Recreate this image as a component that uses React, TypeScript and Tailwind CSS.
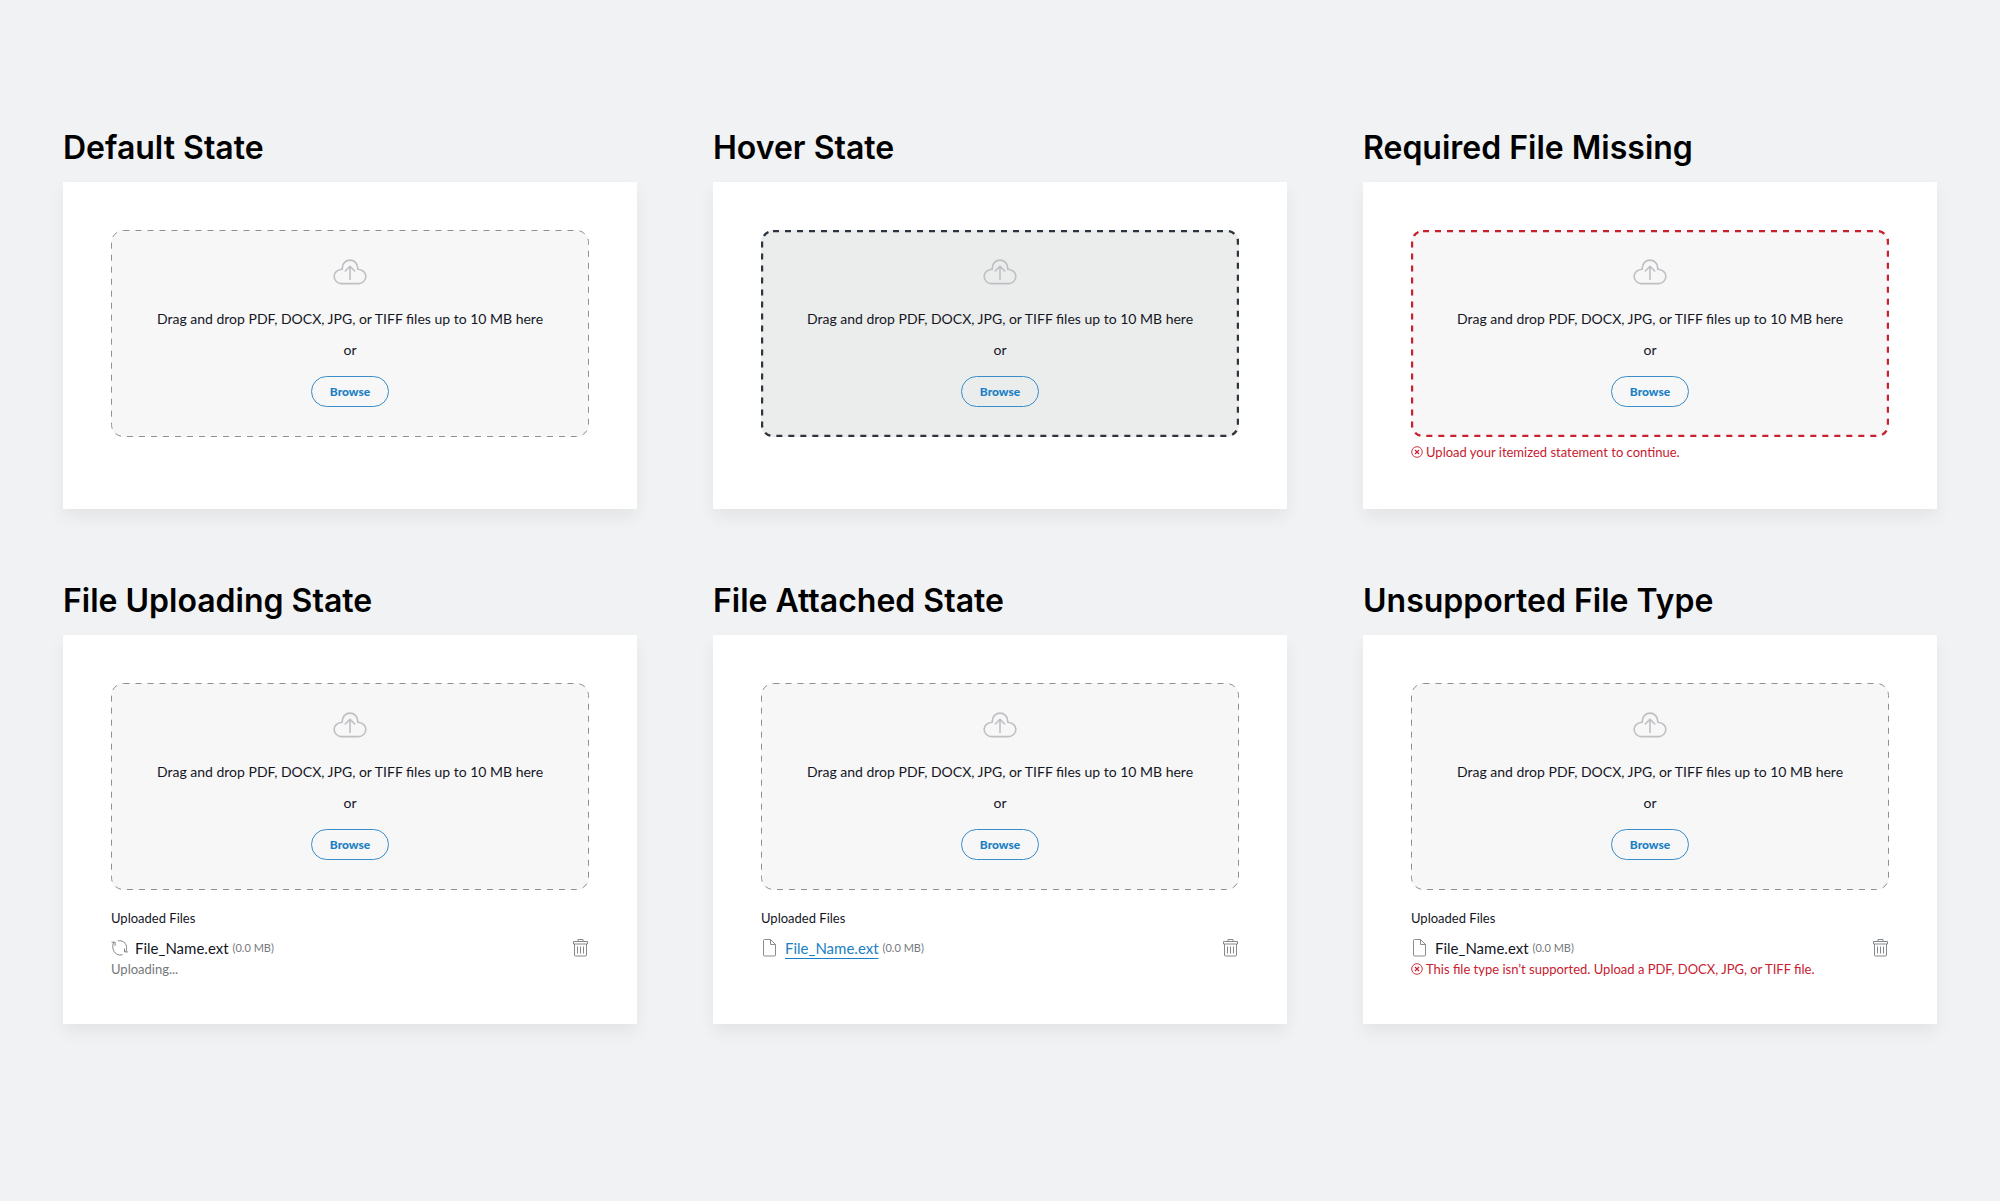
import {clsx} from 'clsx';

type Tone = 'default' | 'hover' | 'error';

interface DropzoneProps {
    id: string
    tone?: Tone
}

interface UploadedFileProps {
    name: string
    size: string
    status: 'uploading' | 'attached' | 'unsupported'
}

interface StateCardProps {
    title: string
    tall?: boolean
    children: React.ReactNode
}

function CloudUploadIcon() {
    return (
        <svg className="w-[34px] h-[26px] text-[#bdbfc2]" viewBox="0 0 34 26" fill="none" stroke="currentColor"
             strokeWidth="1.6" strokeLinecap="round" strokeLinejoin="round" aria-hidden="true">
            <path d="M9.3 10.2V8.8a7.7 7.7 0 0 1 15.4 0v1.4c4.6.2 8.2 3.1 8.2 7.1a7.4 7.4 0 0 1-7.6 7.3H8.7a7.4 7.4 0 0 1-7.6-7.3c0-4 3.6-6.9 8.2-7.1Z"/>
            <path d="M17 20.5V7.3M12.3 12 17 7.3l4.7 4.7"/>
        </svg>
    )
}

function ErrorIcon() {
    return (
        <svg className="w-3 h-3 shrink-0" viewBox="0 0 12 12" fill="none" stroke="currentColor" aria-hidden="true">
            <circle cx="6" cy="6" r="5.3" strokeWidth="0.9"/>
            <path d="m4 4 4 4M8 4 4 8" strokeWidth="1.2"/>
        </svg>
    )
}

function SpinnerIcon() {
    return (
        <svg className="w-[18px] h-4 shrink-0 text-[#75787b]" viewBox="0 0 18 16" fill="none" stroke="currentColor"
             strokeWidth="0.9" aria-hidden="true">
            <path d="M6.8.9C11.5-.2 15.6 3.3 15.6 7.5c0 1.4-.2 2.6-.6 4.1M17.2 11.9h-3.7V8.5"/>
            <path d="M2.8 2.4C.6 6.5 2 11.5 5.3 13.8c1.8 1.3 4.2 1.6 6.2.8M.6 2.2h3.5v3.7"/>
        </svg>
    )
}

function FileIcon() {
    return (
        <svg className="w-[18px] h-[18px] shrink-0 text-[#8a8d90]" viewBox="0 0 18 18" fill="none" stroke="currentColor"
             strokeLinejoin="round" aria-hidden="true">
            <path d="M3.5.5h6l5 5V16a1 1 0 0 1-1 1h-10a1 1 0 0 1-1-1V1.5a1 1 0 0 1 1-1Z"/>
            <path d="M9.5.5v5h5"/>
        </svg>
    )
}

function TrashIcon() {
    return (
        <svg className="w-4 h-[18px] text-[#85888b]" viewBox="0 0 16 18" fill="none" stroke="currentColor"
             strokeLinejoin="round" aria-hidden="true">
            <path d="M.5 2.5h14V5H.5zM5 2.5v-2h5v2M1.5 5v11a1 1 0 0 0 1 1h10a1 1 0 0 0 1-1V5"/>
            <path d="M4.5 7.5v7M7.5 7.5v7M10.5 7.5v7"/>
        </svg>
    )
}

// drawn in svg because the css dashed border has no control over the dash length
function DashedBorder({tone}: {tone: Tone}) {
    return (
        <svg className="absolute inset-0 w-full h-full pointer-events-none" fill="none" aria-hidden="true">
            {tone === 'default' ? (
                <rect x="0.5" y="0.5" rx="12" className="w-[calc(100%-1px)] h-[calc(100%-1px)] stroke-[#8f9193]"
                      strokeWidth="1" strokeDasharray="6 6"/>
            ) : (
                <rect x="1" y="1" rx="11" strokeWidth="2.4" strokeDasharray="6 6"
                      className={clsx('w-[calc(100%-2px)] h-[calc(100%-2px)]', tone === 'hover' ? 'stroke-[#2f333d]' : 'stroke-[#c8202f]')}/>
            )}
        </svg>
    )
}

function Dropzone({id, tone = 'default'}: DropzoneProps) {
    return (
        <div className={clsx('relative flex flex-col items-center rounded-xl pt-[29px] pb-[30px]', tone === 'hover' ? 'bg-[#ebedec]' : 'bg-[#f7f7f7]')}>
            <DashedBorder tone={tone}/>
            <CloudUploadIcon/>
            <p id={id} className="mt-6 text-[14px] leading-5 text-[#14161f]">
                Drag and drop PDF, DOCX, JPG, or TIFF files up to 10 MB here
            </p>
            <p className="mt-[11px] text-[14px] leading-5 text-[#14161f]">or</p>
            <button type="button" aria-describedby={id}
                    className="mt-4 h-[31px] px-[18px] rounded-full border border-[#3a8dc9] text-[12px] leading-4 font-black text-[#1b7fc4] cursor-pointer">
                Browse
            </button>
        </div>
    )
}

function ErrorMessage({children}: {children: React.ReactNode}) {
    return (
        <p role="alert" className="flex items-center gap-[3px] text-[13px] leading-4 text-[#c8202f]">
            <ErrorIcon/>
            {children}
        </p>
    )
}

function UploadedFile({name, size, status}: UploadedFileProps) {
    return (
        <div className="mt-5">
            <h3 className="text-[13px] leading-4 text-[#14161f]">Uploaded Files</h3>
            <div className="mt-3 flex items-center justify-between">
                <div className="flex items-center">
                    {status === 'uploading' ? <SpinnerIcon/> : <FileIcon/>}
                    {status === 'attached' ? (
                        <a href="#file" className="ml-1.5 text-[15px] leading-5 text-[#1b7fc4] underline underline-offset-4">{name}</a>
                    ) : (
                        <span className="ml-1.5 text-[15px] leading-5 text-[#14161f]">{name}</span>
                    )}
                    <span className="ml-1 text-[11px] leading-5 text-[#75787b]">({size})</span>
                </div>
                <button type="button" aria-label={`Remove ${name}`} className="cursor-pointer">
                    <TrashIcon/>
                </button>
            </div>
            {status === 'uploading' && <p className="mt-[3px] text-[13px] leading-4 text-[#75787b]">Uploading...</p>}
            {status === 'unsupported' && (
                <div className="mt-[3px]">
                    <ErrorMessage>This file type isn’t supported. Upload a PDF, DOCX, JPG, or TIFF file.</ErrorMessage>
                </div>
            )}
        </div>
    )
}

function StateCard({title, tall = false, children}: StateCardProps) {
    return (
        <section>
            <h2 className="font-['Inter',sans-serif] text-[32px] leading-10 font-semibold text-black">{title}</h2>
            <div className={clsx('mt-[14px] px-12 pt-12 pb-10 bg-white shadow-[0_8px_16px_rgba(0,0,0,0.06)]', tall ? 'min-h-[389px]' : 'min-h-[327px]')}>
                {children}
            </div>
        </section>
    )
}

export default function App() {
    return (
        <main className="min-h-screen bg-[#f0f2f4] px-[63px] pt-32 pb-16 font-['Lato',sans-serif]">
            <div className="grid grid-cols-3 gap-x-[76px] gap-y-[72px]">
                <StateCard title="Default State">
                    <Dropzone id="dropzone-default"/>
                </StateCard>
                <StateCard title="Hover State">
                    <Dropzone id="dropzone-hover" tone="hover"/>
                </StateCard>
                <StateCard title="Required File Missing">
                    <Dropzone id="dropzone-required" tone="error"/>
                    <div className="mt-[7px]">
                        <ErrorMessage>Upload your itemized statement to continue.</ErrorMessage>
                    </div>
                </StateCard>
                <StateCard title="File Uploading State" tall>
                    <Dropzone id="dropzone-uploading"/>
                    <UploadedFile name="File_Name.ext" size="0.0 MB" status="uploading"/>
                </StateCard>
                <StateCard title="File Attached State" tall>
                    <Dropzone id="dropzone-attached"/>
                    <UploadedFile name="File_Name.ext" size="0.0 MB" status="attached"/>
                </StateCard>
                <StateCard title="Unsupported File Type" tall>
                    <Dropzone id="dropzone-unsupported"/>
                    <UploadedFile name="File_Name.ext" size="0.0 MB" status="unsupported"/>
                </StateCard>
            </div>
        </main>
    )
}
